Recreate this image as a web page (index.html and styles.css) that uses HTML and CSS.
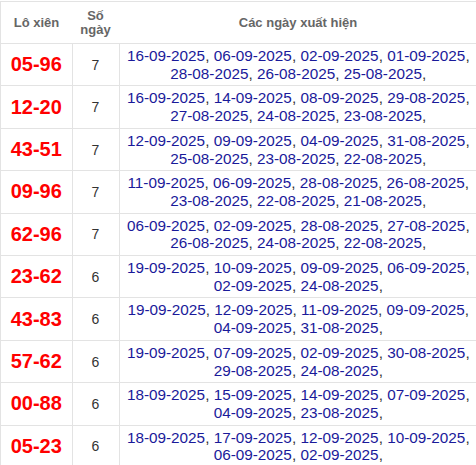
FILE: index.html
```html
<!DOCTYPE html>
<html lang="vi">
<head>
<meta charset="utf-8">
<link rel="stylesheet" href="styles.css">
</head>
<body>
<div class="wrap">
<table class="lx">
  <thead>
    <tr>
      <th class="c1">Lô xiên</th>
      <th class="c2">Số<br>ngày</th>
      <th class="c3">Các ngày xuất hiện</th>
    </tr>
  </thead>
  <tbody>
    <tr><td class="code">05-96</td><td class="num">7</td><td class="dates"><span class="d">16-09-2025</span>, <span class="d">06-09-2025</span>, <span class="d">02-09-2025</span>, <span class="d">01-09-2025</span>, <span class="d">28-08-2025</span>, <span class="d">26-08-2025</span>, <span class="d">25-08-2025</span>,</td></tr>
    <tr><td class="code">12-20</td><td class="num">7</td><td class="dates"><span class="d">16-09-2025</span>, <span class="d">14-09-2025</span>, <span class="d">08-09-2025</span>, <span class="d">29-08-2025</span>, <span class="d">27-08-2025</span>, <span class="d">24-08-2025</span>, <span class="d">23-08-2025</span>,</td></tr>
    <tr><td class="code">43-51</td><td class="num">7</td><td class="dates"><span class="d">12-09-2025</span>, <span class="d">09-09-2025</span>, <span class="d">04-09-2025</span>, <span class="d">31-08-2025</span>, <span class="d">25-08-2025</span>, <span class="d">23-08-2025</span>, <span class="d">22-08-2025</span>,</td></tr>
    <tr><td class="code">09-96</td><td class="num">7</td><td class="dates"><span class="d">11-09-2025</span>, <span class="d">06-09-2025</span>, <span class="d">28-08-2025</span>, <span class="d">26-08-2025</span>, <span class="d">23-08-2025</span>, <span class="d">22-08-2025</span>, <span class="d">21-08-2025</span>,</td></tr>
    <tr><td class="code">62-96</td><td class="num">7</td><td class="dates"><span class="d">06-09-2025</span>, <span class="d">02-09-2025</span>, <span class="d">28-08-2025</span>, <span class="d">27-08-2025</span>, <span class="d">26-08-2025</span>, <span class="d">24-08-2025</span>, <span class="d">22-08-2025</span>,</td></tr>
    <tr><td class="code">23-62</td><td class="num">6</td><td class="dates"><span class="d">19-09-2025</span>, <span class="d">10-09-2025</span>, <span class="d">09-09-2025</span>, <span class="d">06-09-2025</span>, <span class="d">02-09-2025</span>, <span class="d">24-08-2025</span>,</td></tr>
    <tr><td class="code">43-83</td><td class="num">6</td><td class="dates"><span class="d">19-09-2025</span>, <span class="d">12-09-2025</span>, <span class="d">11-09-2025</span>, <span class="d">09-09-2025</span>, <span class="d">04-09-2025</span>, <span class="d">31-08-2025</span>,</td></tr>
    <tr><td class="code">57-62</td><td class="num">6</td><td class="dates"><span class="d">19-09-2025</span>, <span class="d">07-09-2025</span>, <span class="d">02-09-2025</span>, <span class="d">30-08-2025</span>, <span class="d">29-08-2025</span>, <span class="d">24-08-2025</span>,</td></tr>
    <tr><td class="code">00-88</td><td class="num">6</td><td class="dates"><span class="d">18-09-2025</span>, <span class="d">15-09-2025</span>, <span class="d">14-09-2025</span>, <span class="d">07-09-2025</span>, <span class="d">04-09-2025</span>, <span class="d">23-08-2025</span>,</td></tr>
    <tr><td class="code">05-23</td><td class="num">6</td><td class="dates"><span class="d">18-09-2025</span>, <span class="d">17-09-2025</span>, <span class="d">12-09-2025</span>, <span class="d">10-09-2025</span>, <span class="d">06-09-2025</span>, <span class="d">02-09-2025</span>,</td></tr>
  </tbody>
</table>
</div>
</body>
</html>
```

FILE: styles.css
```css
html, body {
  margin: 0;
  padding: 0;
  background: #fff;
}
body {
  font-family: "Liberation Sans", Arial, sans-serif;
  color: #333;
  overflow: hidden;
}
.wrap {
  width: 476px;
  overflow: hidden;
  padding-top: 1px;
}
.lx {
  border-collapse: collapse;
  width: 478px;
  table-layout: fixed;
  border: 1px solid #e3e3e3;
}
.lx th {
  font-size: 13px;
  line-height: 14px;
  font-weight: bold;
  color: #666;
  height: 41px;
  padding: 0;
  text-align: center;
  vertical-align: middle;
  border-bottom: 1px solid #e3e3e3;
}
.lx th.c1 { width: 71px; }
.lx th.c2 { width: 47px; }
.lx td {
  border: 1px solid #e3e3e3;
  text-align: center;
  vertical-align: middle;
  padding: 3px 2px;
}
.lx td.code {
  color: #ff0000;
  font-weight: bold;
  font-size: 20px;
}
.lx td.num {
  font-size: 14px;
  color: #333;
}
.lx td.dates {
  font-size: 15.3px;
  line-height: 17.7px;
  color: #333;
  padding: 3px 2px;
}
.d {
  color: #1a1a9a;
}
```
